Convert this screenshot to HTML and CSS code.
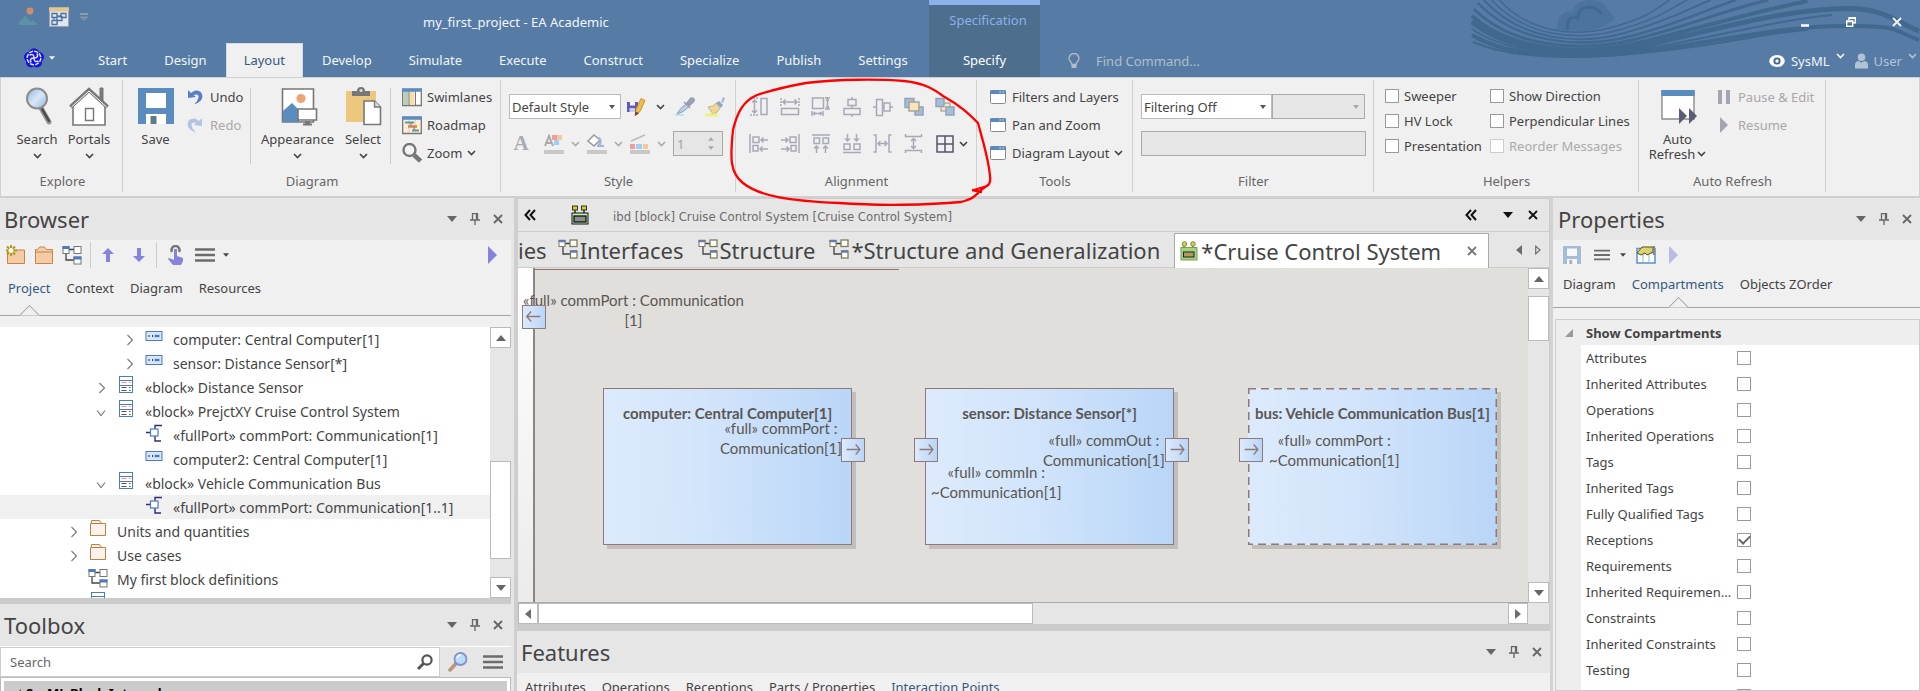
FILE: index.html
```html
<!DOCTYPE html>
<html lang="en">
<head>
<meta charset="utf-8">
<title>my_first_project - EA Academic</title>
<link rel="stylesheet" href="styles.css">
</head>
<body>
<svg class="defs" aria-hidden="true">
  <defs>
    <linearGradient id="g-lens" x1="0" y1="0" x2="1" y2="1"><stop offset="0" stop-color="#8fb4dd"/><stop offset=".5" stop-color="#d9e8f7"/><stop offset="1" stop-color="#8fb4dd"/></linearGradient>
  </defs>
  <symbol id="chev" viewBox="0 0 9 6"><path d="M1 1l3.5 3.5L8 1" fill="none" stroke="currentColor" stroke-width="1.6"/></symbol>
  <symbol id="tri-down" viewBox="0 0 10 6"><path d="M0 0h10L5 6z" fill="currentColor"/></symbol>
  <symbol id="tri-up" viewBox="0 0 10 6"><path d="M0 6h10L5 0z" fill="currentColor"/></symbol>
  <symbol id="tri-left" viewBox="0 0 6 10"><path d="M6 0v10L0 5z" fill="currentColor"/></symbol>
  <symbol id="tri-right" viewBox="0 0 6 10"><path d="M0 0v10l6-5z" fill="currentColor"/></symbol>
  <symbol id="tri-right-o" viewBox="0 0 6 10"><path d="M.7 1.2v7.6L5.2 5z" fill="none" stroke="currentColor" stroke-width="1.2"/></symbol>
  <symbol id="play" viewBox="0 0 9 18"><path d="M0 0v18l9-9z" fill="currentColor"/></symbol>
  <symbol id="close" viewBox="0 0 10 10"><path d="M1 1l8 8M9 1L1 9" fill="none" stroke="currentColor" stroke-width="1.8"/></symbol>
  <symbol id="pin" viewBox="0 0 10 12"><path d="M2.5 6.5v-6h5v6M6.5 1v5M0 7h10M5 7v5" fill="none" stroke="currentColor" stroke-width="1.3"/></symbol>
  <symbol id="dbl-left" viewBox="0 0 12 12"><path d="M6 1L1.500 6L6 11M11 1L6.500 6L11 11" fill="none" stroke="currentColor" stroke-width="2"/></symbol>
  <symbol id="menu" viewBox="0 0 20 14"><path d="M0 1.500h20M0 7h20M0 12.500h20" stroke="#6c6c6c" stroke-width="2.4"/></symbol>
  <symbol id="exp-closed" viewBox="0 0 16 12"><path d="M5.500 1l5 5l-5 5" fill="none" stroke="currentColor" stroke-width="1.1"/></symbol>
  <symbol id="exp-open" viewBox="0 0 16 12"><path d="M3 4.500l4 5l4-5" fill="none" stroke="currentColor" stroke-width="1.1"/></symbol>
  <symbol id="part" viewBox="0 0 20 20"><rect x="2" y="3.500" width="16" height="9" fill="#d6e6fb" stroke="#4f79c4"/><path d="M5 7v2M8.500 7v2" stroke="#335" stroke-width="1"/><path d="M10.500 8h5" stroke="#4f79c4" stroke-width="2.400"/></symbol>
  <symbol id="block" viewBox="0 0 20 20"><rect x="3.500" y=".5" width="13" height="16" fill="#fff" stroke="#4f79c4"/><path d="M3.500 4.500h13M3.500 9.500h13" stroke="#4f79c4"/><path d="M5.500 6.500h5M13 6.500h1.500" stroke="#ee8f8f"/><path d="M5.500 11.500h5M13 11.500h1.500M5.500 14.500h5M13 14.500h1.500" stroke="#555"/></symbol>
  <symbol id="port" viewBox="0 0 20 20"><path d="M2 8.500h4M18 1.500h-7v4M11 12v5h6" fill="none" stroke="#2e2e70" stroke-width="1.400"/><rect x="6.500" y="5" width="7.500" height="7" fill="#fff" stroke="#4f79c4" stroke-width="1.200"/></symbol>
  <symbol id="folder-o" viewBox="0 0 20 20"><path d="M2.500 15.500v-12h15v12zM3.500 3.500v-3h8l2 3" fill="#fdf1ec" stroke="#b78243"/></symbol>
  <symbol id="bdd" viewBox="0 0 20 20"><path d="M7 4.500h5M4 8v7h8" fill="none" stroke="#444" stroke-width="1.300"/><rect x="1" y="1.500" width="6" height="7" fill="#fff" stroke="#777"/><rect x="12" y="1.500" width="7" height="7" fill="#fff" stroke="#777"/><rect x="12" y="12" width="7" height="7" fill="#fff" stroke="#777"/><path d="M.5 2.500h7M11.500 13h8" stroke="#4f79c4" stroke-width="3"/></symbol>
  <symbol id="bdd-tab" viewBox="0 0 20 20"><path d="M7 4.500h5M5 8v7h7" fill="none" stroke="#444" stroke-width="1.300"/><rect x="1" y="1.500" width="6" height="6" fill="#fff" stroke="#7f7d58"/><rect x="12" y="1" width="7" height="6.500" fill="#fff" stroke="#7f7d58" stroke-width="1.300"/><rect x="12.500" y="12" width="6.500" height="7" fill="#fff" stroke="#7f7d58" stroke-width="1.300"/><path d="M.5 2h7M12 12.500h7" stroke="#6a78ad" stroke-width="2.500"/></symbol>
  <symbol id="ibd" viewBox="0 0 18 20"><path d="M4 5v6M13 5v6" stroke="#111" stroke-width="1.300"/><rect x="1.500" y="1" width="5" height="4" fill="#d6d01a" stroke="#333"/><rect x="10.500" y="1" width="5" height="4" fill="#d6d01a" stroke="#333"/><rect x="1" y="8" width="16" height="11" fill="#bdf0b4" stroke="#111"/><rect x="3" y="11" width="12" height="6" fill="#8d8d8d" stroke="#111" stroke-width="1.300"/></symbol>
  <symbol id="ibd-tab" viewBox="0 0 18 20"><path d="M4 5v6M13 5v6" stroke="#222" stroke-width="1.200"/><rect x="1" y="6.500" width="16" height="12.500" fill="#a2d37f" stroke="#7f9a5d"/><rect x="3.500" y="11" width="10.500" height="5" fill="#b09c60" stroke="#222"/><circle cx="4.500" cy="3" r="2.300" fill="#d2d24a" stroke="#888640"/><circle cx="13" cy="3" r="2.300" fill="#d2d24a" stroke="#888640"/></symbol>
  <symbol id="window" viewBox="0 0 16 14"><rect x=".5" y=".5" width="15" height="13" rx="1" fill="#fff" stroke="#8b8b8b"/><path d="M0 2.200h16" stroke="#5d8aba" stroke-width="3.600"/><path d="M9.500 2h1.300M12.500 2h1.300" stroke="#fff" stroke-width="1.200"/></symbol>
  <symbol id="floppy" viewBox="0 0 36 36"><path d="M0 0h36v36H0z" fill="#5b8cbf"/><path d="M8 5h20v15H8zM8 26h20v10H8z" fill="#fff"/><path d="M12.500 28h6v8h-6z" fill="#5d7a8a"/></symbol>
</svg>

<div class="app">
<header class="header">
  <svg class="waves" viewBox="0 0 460 77" preserveAspectRatio="none" aria-hidden="true">
    <g fill="none" stroke="#41688f">
      <path d="M30 0C62 34 110 38 150 26S190 8 204 0" stroke-width="1.500"/>
      <path d="M22 0C56 36 108 42 152 30S205 8 222 0" stroke-width="1.500"/>
      <path d="M14 0C52 40 110 46 158 33S225 8 246 0" stroke-width="2"/>
      <path d="M8 3C46 42 110 50 165 36S245 8 272 0" stroke-width="2.500"/>
      <path d="M4 9C42 46 110 54 170 39S260 10 305 0" stroke-width="3"/>
      <path d="M2 16C40 49 110 58 176 42S285 13 345 1" stroke-width="4"/>
      <path d="M2 22C40 52 115 60 185 44S315 12 370 9S430 20 459 31" stroke-width="5"/>
      <path d="M2 29C40 55 115 60 190 47S315 20 370 15" stroke-width="2"/>
      <path d="M2 35C40 58 115 61 195 49S325 26 385 26S430 30 459 40" stroke-width="4"/>
      <path d="M3 42C45 60 115 60 195 51S300 33 345 30" stroke-width="2"/>
    </g>
    <path d="M89 30C88 15 98 10 104 12C108 -2 130 -3 138 5C142 12 146 14 148 18Q140 28 120 31Z" fill="#4b739b"/>
    <path d="M100 30C98 18 106 16 110 18C112 4 128 4 134 14" fill="none" stroke="#41688f" stroke-width="3"/>
  </svg>
  <div class="head-left">
    <div class="title-row">
      <div class="qat">
        <svg class="i20" viewBox="0 0 20 20"><circle cx="12" cy="4" r="3.400" fill="#cf8d68"/><path d="M1 18v-3l6-6l6 6l2-2l4 4v1z" fill="#5b93a4"/></svg>
        <svg class="i20" viewBox="0 0 20 20"><path d="M.5.5h19v19H.5z" fill="#dfe6ee" stroke="#9aa5b1"/><path d="M0 2.500h20" stroke="#e3c68d" stroke-width="4"/><path d="M7 9h5M5 11v5h4" stroke="#4c6f9c" fill="none"/><path d="M3 6.500h5v4H3zM12 6.500h5v4h-5zM8 9.500h5v4H8zM3 13.500h5v4H3z" fill="#dfe6ee" stroke="#4c6f9c" stroke-width="1.300"/></svg>
        <svg class="qat-more" viewBox="0 0 8 8"><path d="M0 1h8" stroke="#a1abb5" stroke-width="1.400"/><path d="M.5 4h7L4 7.500z" fill="#7a8590" stroke="#a1abb5" stroke-width=".6"/></svg>
      </div>
      <h1 class="app-title">my_first_project - EA Academic</h1>
    </div>
    <nav class="tabs">
      <button class="app-menu" aria-label="Application menu">
        <svg class="i20" viewBox="0 0 20 20"><g fill="#1414e0"><circle cx="10" cy="5.500" r="5.300"/><circle cx="5" cy="9" r="5"/><circle cx="15" cy="9" r="5"/><circle cx="7" cy="14.500" r="5"/><circle cx="13" cy="14.500" r="5"/></g><g fill="none" stroke="#e4e4ff" stroke-width="1.500"><circle cx="10" cy="10" r="6.800" stroke-dasharray="4.100 1.240"/><path d="M5.500 7q4.500-2 4.500 3q0 5 4.500 3M13 5.500q2 4.500-3 4.500q-5 0-3 4.500"/></g></svg>
        <svg class="tri-s" ><use href="#tri-down"/></svg>
      </button>
      <button class="tab">Start</button><button class="tab">Design</button><button class="tab tab-on">Layout</button><button class="tab">Develop</button><button class="tab">Simulate</button><button class="tab">Execute</button><button class="tab">Construct</button><button class="tab">Specialize</button><button class="tab">Publish</button><button class="tab">Settings</button>
    </nav>
  </div>
  <div class="context">
    <span class="context-name">Specification</span>
    <button class="tab">Specify</button>
  </div>
  <div class="head-right">
    <div class="win">
      <button aria-label="Minimize"><svg class="i10" viewBox="0 0 10 10"><path d="M1 8.500h8" stroke="#fff" stroke-width="2.500"/></svg></button>
      <button aria-label="Restore"><svg class="i10" viewBox="0 0 10 10"><path d="M3 3V.8h6.300v5H7M.7 4h6v5.300h-6zM.5 4.500h6.500M3 1.200h6.500" fill="none" stroke="#fff" stroke-width="1.400"/></svg></button>
      <button aria-label="Close"><svg class="i10"><use href="#close"/></svg></button>
    </div>
    <div class="head-tools">
      <svg class="bulb" viewBox="0 0 12 16"><path d="M4 11.500C4 9 1 8.500 1 5.500a5 5 0 0 1 10 0C11 8.500 8 9 8 11.500z" fill="none" stroke="#b4bcc5" stroke-width="1.300"/><path d="M3.500 11h5v4h-5z" fill="#b4bcc5"/></svg>
      <input class="find" aria-label="Find Command" placeholder="Find Command...">
      <button class="persp">
        <svg class="eye" viewBox="0 0 16 12"><ellipse cx="8" cy="6" rx="7.800" ry="6" fill="#fff"/><circle cx="8" cy="6" r="3.600" fill="#3f6792"/><circle cx="8" cy="6" r="1.700" fill="#fff"/></svg>
        SysML <svg class="chev up"><use href="#chev"/></svg></button>
      <button class="persp user">
        <svg class="person" viewBox="0 0 14 16"><circle cx="7" cy="4" r="4" fill="#b2c3d6"/><path d="M0 16v-5q1-3 4-3l3 2l3-2q3 0 4 3v5z" fill="#b2c3d6"/></svg>
        User <svg class="chev up"><use href="#chev"/></svg></button>
    </div>
  </div>
</header>

<section class="ribbon" aria-label="Layout ribbon">
  <div class="group g-explore">
    <div class="g-body">
      <button class="big"><svg class="i40" viewBox="0 0 40 40"><path d="M24 22l8 14" stroke="#999" stroke-width="5" stroke-linecap="round"/><path d="M25 23l7 12" stroke="#4d4d4d" stroke-width="2.500" stroke-linecap="round"/><circle cx="20" cy="12.500" r="10" fill="url(#g-lens)" stroke="#8c8c8c" stroke-width="2"/></svg>Search<svg class="chev"><use href="#chev"/></svg></button>
      <button class="big"><svg class="i40" viewBox="0 0 40 40"><path d="M31 2h3v13h-3z" fill="#777" stroke="#777"/><path d="M4 39V20L20 5l16 15v19z" fill="#fff" stroke="#777" stroke-width="1.600"/><path d="M1.500 21L20 4l18.500 17" fill="none" stroke="#777" stroke-width="4"/><path d="M2.500 21L20 5l17.500 16" fill="none" stroke="#fff" stroke-width="1"/><path d="M16.500 22.500h8v12h-8z" fill="#fff" stroke="#777" stroke-width="1.400"/></svg>Portals<svg class="chev"><use href="#chev"/></svg></button>
    </div>
    <h2>Explore</h2>
  </div>
  <div class="group g-diagram">
    <div class="g-body">
      <button class="big"><svg class="i40 pad2"><use href="#floppy"/></svg>Save</button>
      <div class="stack s-undo">
        <button class="row"><svg class="i16" viewBox="0 0 16 16"><path d="M1 1l0 8l8-1l-2.500-2Q12 4 11.500 8.500Q11 12 7 15.500Q15 13 15.500 7.500Q15 1 8.500 1.500Q6 2 4 4z" fill="#5580c4"/></svg>Undo</button>
        <button class="row" disabled><svg class="i16" viewBox="0 0 16 16"><path d="M15 1l0 8l-8-1l2.500-2Q4 4 4.500 8.500Q5 12 9 15.500Q1 13 .5 7.500Q1 1 7.500 1.500Q10 2 12 4z" fill="#b3c3e2"/></svg>Redo</button>
      </div>
      <i class="vsep"></i>
      <button class="big wide"><svg class="i40" viewBox="0 0 40 40"><path d="M4.500 3h31v33h-31z" fill="#fff" stroke="#777" stroke-width="1.600"/><path d="M5 36V25l9-8l7 7v12z" fill="#5b8cbf"/><circle cx="23" cy="12.500" r="4.600" fill="#eea477"/><path d="M20 23h18.500v11H20z" fill="#fff" stroke="#777" stroke-width="1.600"/><path d="M27 35h5v3h-5z" fill="#777"/><path d="M25 38.500h9" stroke="#777" stroke-width="2"/></svg>Appearance<svg class="chev"><use href="#chev"/></svg></button>
      <button class="big sel-btn"><svg class="i40" viewBox="0 0 40 40"><path d="M3 5h30v31H3z" fill="#ecc77e"/><path d="M9 5h5q0-4 4-4t4 4h5v5H9z" fill="#777"/><circle cx="18" cy="4.500" r="1.500" fill="#ddd"/><path d="M21 15h10.500l6 6v17.500H21z" fill="#fff" stroke="#777" stroke-width="1.600"/><path d="M31.500 15v6h6" fill="#ddd" stroke="#777" stroke-width="1.400"/></svg>Select<svg class="chev"><use href="#chev"/></svg></button>
      <i class="vsep"></i>
      <div class="stack">
        <button class="row"><svg class="i20" viewBox="0 0 20 20"><path d="M.7 2.500h18.600v16H.7z" fill="#fff" stroke="#777" stroke-width="1.300"/><path d="M1.500 4h5v14h-5z" fill="#b9cdb0"/><path d="M7.500 4h5v14h-5z" fill="#f7dcb0"/><path d="M7 4v14M13.500 4v14" stroke="#777"/><path d="M0 3h20" stroke="#5b8cbf" stroke-width="3.500"/></svg>Swimlanes</button>
        <button class="row"><svg class="i20" viewBox="0 0 20 20"><path d="M.7 2.500h18.600v16H.7z" fill="#fdeed8" stroke="#777" stroke-width="1.300"/><path d="M7 5v13M13 5v13" stroke="#ccc"/><path d="M3 7.500h9M10 15.500h7" stroke="#5d98a3" stroke-width="2.200"/><path d="M6 11.500h9" stroke="#dd8351" stroke-width="2.500"/><path d="M9 8v3M12 12v3" stroke="#777"/><path d="M0 3h20" stroke="#5b8cbf" stroke-width="3.500"/></svg>Roadmap</button>
        <button class="row"><svg class="i20" viewBox="0 0 20 20"><path d="M12 12l6.500 6" stroke="#777" stroke-width="4.500"/><circle cx="7.500" cy="7" r="6" fill="#f3f3f3" stroke="#777" stroke-width="2.400"/></svg>Zoom <svg class="chev"><use href="#chev"/></svg></button>
      </div>
    </div>
    <h2>Diagram</h2>
  </div>
  <div class="group g-style">
    <div class="g-body two">
      <div class="line">
        <span class="combo c-style"><select aria-label="Default Style"><option>Default Style</option></select></span>
        <button class="tool" aria-label="Save style"><svg class="i20" viewBox="0 0 20 20"><path d="M1 5h11v10H1z" fill="#5c5cb8"/><path d="M4 5h5v3.500H4z" fill="#f4f4ff"/><path d="M3.500 11h5.500v4H3.500z" fill="#c9c9ec"/><path d="M9 18.500l1-6.500l5-10.500l4 2l-5 11z" fill="#f0bd48" stroke="#b58427" stroke-width=".8"/><path d="M9 19l.5-4.500l3.500 1.800z" fill="#7a3320"/></svg></button>
        <button class="tool" aria-label="Style options"><svg class="chev mid"><use href="#chev"/></svg></button>
        <button class="tool" aria-label="Pick style"><svg class="i20" viewBox="0 0 20 20"><path d="M2 17q2-5 9-10l3 2.500q-5 6-12 7.500z" fill="#b9cfe6" stroke="#8aa3bd"/><path d="M9 5l6 6M11 7l5-6q4 0 3 3l-5 5z" fill="#9a9fb3" stroke="#9a9fb3" stroke-width="1.500"/><path d="M0 18h9" stroke="#bfe0f0" stroke-width="2"/></svg></button>
        <button class="tool" aria-label="Apply style"><svg class="i20" viewBox="0 0 20 20"><path d="M3 10q6 0 8-4l4 5q-2 5-7 6z" fill="#ecd69a" stroke="#c8b37c"/><path d="M11 6l5 5l2-3l-4-4z" fill="#8ea6c2"/><path d="M16 5l2-5l2 1l-2 5z" fill="#9db9d8"/><path d="M0 18h13" stroke="#eef080" stroke-width="3"/></svg></button>
      </div>
      <div class="line dim">
        <button class="tool a" disabled aria-label="Font"><span class="font-a">A</span></button>
        <button class="tool" disabled aria-label="Font colour"><svg class="i20" viewBox="0 0 20 20"><path d="M1 12L5 2l4 10M2.500 9h5" fill="none" stroke="#aaa" stroke-width="2"/><path d="M8 1h5v5H8z" fill="#f09c9c"/><path d="M13 1h5v5h-5z" fill="#f6c99c"/><path d="M10 6h5v5h-5z" fill="#a4cdf5"/><path d="M0 18h20" stroke="#c8c8c8" stroke-width="4"/></svg></button>
        <svg class="chev"><use href="#chev"/></svg>
        <button class="tool" disabled aria-label="Fill colour"><svg class="i20" viewBox="0 0 20 20"><path d="M1 7l6-6l6 5l-6 6z" fill="#fff" stroke="#999" stroke-width="1.500"/><path d="M11 3q5 0 3 8h3v2h-7v-2q3-1 1-8z" fill="#a3b5d4"/><path d="M0 18h20" stroke="#c8c8c8" stroke-width="4"/></svg></button>
        <svg class="chev"><use href="#chev"/></svg>
        <button class="tool" disabled aria-label="Line colour"><svg class="i20" viewBox="0 0 20 20"><path d="M1 7l14-6" stroke="#bbb" stroke-width="1.500"/><path d="M0 10h5v5H0z" fill="#f09c9c"/><path d="M6 10h6v5H6z" fill="#a4cdf5"/><path d="M13 10h5v5h-5z" fill="#f6c99c"/><path d="M0 18h20" stroke="#c8c8c8" stroke-width="4"/></svg></button>
        <svg class="chev"><use href="#chev"/></svg>
        <span class="spin"><input value="1" disabled aria-label="Line width"><span class="spin-a"><svg class="tri-x"><use href="#tri-up"/></svg><svg class="tri-x"><use href="#tri-down"/></svg></span></span>
      </div>
    </div>
    <h2>Style</h2>
  </div>
  <div class="group g-align">
    <div class="g-body">
      <div class="align-grid">
        <svg viewBox="0 0 20 20"><path d="M1 1h9M1 18h9" stroke-dasharray="2 1"/><path d="M5.500 3v13M3 5.500L5.500 3L8 5.500M3 13.500L5.500 16L8 13.500"/><rect x="12" y="1.500" width="6" height="16"/></svg>
        <svg viewBox="0 0 20 20"><path d="M1 1v8M19 1v8" stroke-dasharray="2 1"/><path d="M3 5h14M5.500 2.500L3 5l2.500 2.500M14.500 2.500L17 5l-2.500 2.500"/><rect x="1.500" y="11.500" width="17" height="6"/></svg>
        <svg viewBox="0 0 20 20"><rect x="1.500" y="1" width="11" height="10.500"/><path d="M14 .700h5M14 12h5M16.500 2v9M15 3.500L16.500 2L18 3.500M15 9.500L16.500 11L18 9.500M1 14v5M12 14v5M2.500 16.500h8M4 15l-1.500 1.500L4 18M9 15l1.500 1.500L9 18"/></svg>
        <svg viewBox="0 0 20 20"><path d="M10 0v2M10 8v4M10 18v2"/><rect x="6" y="2.500" width="8" height="6"/><rect x="2" y="11.500" width="16" height="6"/></svg>
        <svg viewBox="0 0 20 20"><path d="M0 10h3M9 10h2M17 10h3"/><rect x="3.500" y="2.500" width="6" height="16"/><rect x="11" y="6" width="6" height="8"/></svg>
        <svg viewBox="0 0 20 20" class="z"><path d="M1 1.500h9v9H1zM11 10h8v8h-8z" fill="#a8bdd6" stroke="#8fa5bf"/><path d="M5 5h10v9H5z" fill="#f6e3c0" stroke="#a9a393"/></svg>
        <svg viewBox="0 0 20 20" class="z"><path d="M6 6h9v8H6z" fill="#f6e3c0" stroke="#b7ae97"/><path d="M1 1.500h8v8H1zM11 10h8v8h-8z" fill="#a8bdd6" stroke="#8fa5bf"/></svg>
        <span></span>
        <svg viewBox="0 0 20 20"><path d="M1 0v19M12 6h7M14.500 3.500L12 6l2.500 2.500M11 15h8M13.500 12.500L11 15l2.500 2.500"/><rect x="4" y="3" width="6" height="5.500"/><rect x="4" y="11.500" width="5" height="5.500"/></svg>
        <svg viewBox="0 0 20 20"><path d="M19 0v19M1 6h7M5.500 3.500L8 6L5.500 8.500M1 15h8M6.500 12.500L9 15l-2.500 2.500"/><rect x="10" y="3" width="6" height="5.500"/><rect x="11" y="11.500" width="5" height="5.500"/></svg>
        <svg viewBox="0 0 20 20"><path d="M1 1h18M5.500 19v-7M3 14.500L5.500 12L8 14.500M14.500 19v-7M12 14.500l2.500-2.500l2.500 2.500"/><rect x="3" y="4" width="5.500" height="5.500"/><rect x="12" y="4" width="5.500" height="5.500"/></svg>
        <svg viewBox="0 0 20 20"><path d="M1 18.500h18M5.500 0v7M3 4.500L5.500 7L8 4.500M14.500 0v7M12 4.500L14.500 7L17 4.500"/><rect x="2" y="10" width="6" height="5.500"/><rect x="12" y="10" width="6" height="5.500"/></svg>
        <svg viewBox="0 0 20 20"><path d="M.5 1h2.500v17H.5M18.500 1H16v17h2.500M5 9.500h9M7.500 7L5 9.500L7.500 12M11.500 7l2.500 2.500L11.500 12"/></svg>
        <svg viewBox="0 0 20 20"><path d="M1.500 0v2.500h16V0M1.500 19v-2.500h16V19M9.500 4.500v10M7 7l2.500-2.500L12 7M7 12l2.500 2.500L12 12"/></svg>
        <svg viewBox="0 0 20 20" class="on"><rect x="2" y="2" width="16" height="16"/><path d="M10 2v16M2 10h16"/></svg>
        <svg class="chev"><use href="#chev"/></svg>
      </div>
    </div>
    <h2>Alignment</h2>
  </div>
  <div class="group g-tools">
    <div class="g-body">
      <div class="stack">
        <button class="row"><svg class="win-i"><use href="#window"/></svg>Filters and Layers</button>
        <button class="row"><svg class="win-i"><use href="#window"/></svg>Pan and Zoom</button>
        <button class="row"><svg class="win-i"><use href="#window"/></svg>Diagram Layout <svg class="chev"><use href="#chev"/></svg></button>
      </div>
    </div>
    <h2>Tools</h2>
  </div>
  <div class="group g-filter">
    <div class="g-body two">
      <div class="line tight">
        <span class="combo c-filter"><select aria-label="Filtering"><option>Filtering Off</option></select></span>
        <span class="combo off"><select disabled aria-label="Filter value"><option></option></select></span>
      </div>
      <input class="off-input" disabled aria-label="Filter text">
    </div>
    <h2>Filter</h2>
  </div>
  <div class="group g-helpers">
    <div class="g-body">
      <div class="checks">
        <label><input type="checkbox">Sweeper</label>
        <label><input type="checkbox">Show Direction</label>
        <label><input type="checkbox">HV Lock</label>
        <label><input type="checkbox">Perpendicular Lines</label>
        <label><input type="checkbox">Presentation</label>
        <label class="off"><input type="checkbox" disabled>Reorder Messages</label>
      </div>
    </div>
    <h2>Helpers</h2>
  </div>
  <div class="group g-auto">
    <div class="g-body">
      <button class="big two-line"><svg class="i40" viewBox="0 0 40 40"><path d="M4 5h32v28H4z" fill="#fff" stroke="#8a8a8a" stroke-width="1.400"/><path d="M3.300 7h33.400" stroke="#5b8cbf" stroke-width="6"/><path d="M21 22v16l8-8zM31 22v16l8-8z" fill="#5d5b75"/></svg><span>Auto<br>Refresh<svg class="chev"><use href="#chev"/></svg></span></button>
      <div class="stack">
        <button class="row" disabled><svg class="i16" viewBox="0 0 16 16"><path d="M2 1h4v14H2zM10 1h4v14h-4z" fill="#a5a5b2"/></svg>Pause &amp; Edit</button>
        <button class="row" disabled><svg class="i16" viewBox="0 0 16 16"><path d="M4 0v16l8-8z" fill="#a5a5b2"/></svg>Resume</button>
      </div>
    </div>
    <h2>Auto Refresh</h2>
  </div>
</section>

<svg class="ink" viewBox="0 0 264 128" aria-hidden="true"><path d="M245 112L258 108C263 105 261 98 260 90C257 72 253 60 249 45C240 36 232 28 214 18C206 12 196 5 175 3C150 1 110 1 77 5C55 9 40 13 28 17C14 23 8 35 4 52C1 80 1 95 14 105C30 118 60 123 110 125C150 128 200 127 232 124C250 119 245 116 259 107M243 112L253 114" fill="none" stroke="#ff0000" stroke-width="2.300"/></svg>

<main class="work">
  <aside class="left">
    <section class="panel browser">
      <header class="p-title"><h2>Browser</h2><span class="p-btns"><button aria-label="Menu"><svg class="tri"><use href="#tri-down"/></svg></button><button aria-label="Pin"><svg class="pin"><use href="#pin"/></svg></button><button aria-label="Close"><svg class="i10"><use href="#close"/></svg></button></span></header>
      <div class="p-tools">
        <svg class="i20" viewBox="0 0 20 20"><path d="M1.500 5h17v13.500h-17z" fill="#f5cba6" stroke="#c28746"/><path d="M5 0v11M0 5.500h11M1 1.500l8 8M9 1.500l-8 8" stroke="#b19b16" stroke-width="2"/><circle cx="5" cy="5.500" r="2.500" fill="#fff"/></svg>
        <svg class="i20" viewBox="0 0 20 20"><path d="M1.500 18.500v-14h2l2-2.500h5l2 2.500h6v14z" fill="#f5cba6" stroke="#c28746"/><path d="M2 7h16" stroke="#c28746"/></svg>
        <svg class="i20"><use href="#bdd"/></svg>
        <i class="vsep"></i>
        <svg class="arrow" viewBox="0 0 12 14"><path d="M6 0l6 6H8v8H4V6H0z" fill="#8683df"/></svg>
        <svg class="arrow" viewBox="0 0 12 14"><path d="M6 14l6-6H8V0H4v8H0z" fill="#8683df"/></svg>
        <i class="vsep"></i>
        <svg class="i20" viewBox="0 0 20 20"><path d="M6 7a4 4 0 1 1 7 0" fill="none" stroke="#777" stroke-width="2.500"/><path d="M8 4h3v7l6 2v3l-2 4H7l-5-6l1-1l5 2z" fill="#8683df"/></svg>
        <svg class="menu"><use href="#menu"/></svg><svg class="tri-x"><use href="#tri-down"/></svg>
        <svg class="play end"><use href="#play"/></svg>
      </div>
      <nav class="p-tabs"><button class="on">Project</button><button>Context</button><button>Diagram</button><button>Resources</button></nav>
      <div class="tree-wrap">
        <ul class="tree">
          <li class="l2"><svg class="ex"><use href="#exp-closed"/></svg><svg class="i20"><use href="#part"/></svg>computer: Central Computer[1]</li>
          <li class="l2"><svg class="ex"><use href="#exp-closed"/></svg><svg class="i20"><use href="#part"/></svg>sensor: Distance Sensor[*]</li>
          <li class="l1"><svg class="ex"><use href="#exp-closed"/></svg><svg class="i20"><use href="#block"/></svg>«block» Distance Sensor</li>
          <li class="l1"><svg class="ex"><use href="#exp-open"/></svg><svg class="i20"><use href="#block"/></svg>«block» PrejctXY Cruise Control System</li>
          <li class="l2"><svg class="ex"></svg><svg class="i20"><use href="#port"/></svg>«fullPort» commPort: Communication[1]</li>
          <li class="l2"><svg class="ex"></svg><svg class="i20"><use href="#part"/></svg>computer2: Central Computer[1]</li>
          <li class="l1"><svg class="ex"><use href="#exp-open"/></svg><svg class="i20"><use href="#block"/></svg>«block» Vehicle Communication Bus</li>
          <li class="l2 sel"><svg class="ex"></svg><svg class="i20"><use href="#port"/></svg>«fullPort» commPort: Communication[1..1]</li>
          <li class="l0"><svg class="ex"><use href="#exp-closed"/></svg><svg class="i20"><use href="#folder-o"/></svg>Units and quantities</li>
          <li class="l0"><svg class="ex"><use href="#exp-closed"/></svg><svg class="i20"><use href="#folder-o"/></svg>Use cases</li>
          <li class="l0"><svg class="ex"></svg><svg class="i20"><use href="#bdd"/></svg>My first block definitions</li>
          <li class="l0"><svg class="ex"></svg><svg class="i20"><use href="#block"/></svg></li>
        </ul>
        <div class="vscroll"><button aria-label="Up"><svg class="tri"><use href="#tri-up"/></svg></button><i class="track-a"></i><i class="thumb"></i><i class="track-b"></i><button aria-label="Down"><svg class="tri"><use href="#tri-down"/></svg></button></div>
      </div>
    </section>
    <section class="panel toolbox">
      <header class="p-title"><h2>Toolbox</h2><span class="p-btns"><button aria-label="Menu"><svg class="tri"><use href="#tri-down"/></svg></button><button aria-label="Pin"><svg class="pin"><use href="#pin"/></svg></button><button aria-label="Close"><svg class="i10"><use href="#close"/></svg></button></span></header>
      <div class="tb-search">
        <label class="tb-box"><input type="text" placeholder="Search" aria-label="Search toolbox"><svg class="i16" viewBox="0 0 16 16"><circle cx="10" cy="6" r="4.600" fill="none" stroke="#555" stroke-width="2.200"/><path d="M6.500 9.500L1 15" stroke="#555" stroke-width="3"/></svg></label>
        <svg class="i20" viewBox="0 0 20 20"><path d="M8 11.500L2 18" stroke="#b9957b" stroke-width="3.500" stroke-linecap="round"/><circle cx="12.500" cy="7" r="6" fill="#b9dcf8" stroke="#8391cf" stroke-width="1.800"/><path d="M9 6q1-3 4-3" stroke="#fff" stroke-width="1.500" fill="none"/></svg>
        <svg class="menu"><use href="#menu"/></svg>
      </div>
      <div class="tb-list"><h3><svg class="i8" viewBox="0 0 8 8"><path d="M8 0v8H0z" fill="#555"/></svg>SysML Block Internal</h3></div>
    </section>
  </aside>

  <section class="center">
    <div class="doc">
      <header class="crumb">
        <button aria-label="Collapse"><svg class="i12"><use href="#dbl-left"/></svg></button>
        <svg class="ibd-i"><use href="#ibd"/></svg>
        <span class="path">ibd [block] Cruise Control System [Cruise Control System]</span>
        <span class="crumb-btns"><button class="prev" aria-label="Previous"><svg class="i12"><use href="#dbl-left"/></svg></button><button aria-label="List"><svg class="tri"><use href="#tri-down"/></svg></button><button aria-label="Close"><svg class="i10"><use href="#close"/></svg></button></span>
      </header>
      <nav class="doc-tabs">
        <button class="cut">ies</button>
        <button><svg class="i20"><use href="#bdd-tab"/></svg>Interfaces</button>
        <button><svg class="i20"><use href="#bdd-tab"/></svg>Structure</button>
        <button><svg class="i20"><use href="#bdd-tab"/></svg>*Structure and Generalization</button>
        <button class="on"><svg class="ibd-i"><use href="#ibd-tab"/></svg>*Cruise Control System<svg class="i10 x"><use href="#close"/></svg></button>
        <span class="doc-nav"><svg class="tri-h"><use href="#tri-left"/></svg><svg class="tri-h"><use href="#tri-right-o"/></svg></span>
      </nav>
      <div class="canvas-wrap">
        <div class="canvas">
          <div class="frame"></div>
          <div class="blk b1">computer: Central Computer[1]</div>
          <div class="blk b2">sensor: Distance Sensor[*]</div>
          <div class="blk b3"><svg class="dash" aria-hidden="true"><rect x="0" y="0" width="100%" height="100%"/></svg>bus: Vehicle Communication Bus[1]</div>
          <div class="lbl t0">«full» commPort : Communication<br>[1]</div>
          <div class="lbl t1">«full» commPort :<br>Communication[1]</div>
          <div class="lbl t2">«full» commIn :<br>~Communication[1]</div>
          <div class="lbl t3">«full» commOut :<br>Communication[1]</div>
          <div class="lbl t4">«full» commPort :<br>~Communication[1]</div>
          <svg class="prt p0" viewBox="0 0 24 24"><path d="M19 11.500H5M9 6l-5 5.500L9 17"/></svg>
          <svg class="prt p1" viewBox="0 0 24 24"><path d="M5 11.500h14M15 6l4.500 5.500L15 17"/></svg>
          <svg class="prt p2" viewBox="0 0 24 24"><path d="M5 11.500h14M15 6l4.500 5.500L15 17"/></svg>
          <svg class="prt p3" viewBox="0 0 24 24"><path d="M5 11.500h14M15 6l4.500 5.500L15 17"/></svg>
          <svg class="prt p4" viewBox="0 0 24 24"><path d="M5 11.500h14M15 6l4.500 5.500L15 17"/></svg>
        </div>
        <div class="vscroll"><button aria-label="Up"><svg class="tri"><use href="#tri-up"/></svg></button><i class="track-a"></i><i class="thumb"></i><i class="track-b"></i><button aria-label="Down"><svg class="tri"><use href="#tri-down"/></svg></button></div>
      </div>
      <div class="hscroll"><button aria-label="Left"><svg class="tri-h"><use href="#tri-left"/></svg></button><i class="thumb"></i><i class="track-b"></i><button aria-label="Right"><svg class="tri-h"><use href="#tri-right"/></svg></button><i class="corner"></i></div>
    </div>
    <section class="panel features">
      <header class="p-title"><h2>Features</h2><span class="p-btns"><button aria-label="Menu"><svg class="tri"><use href="#tri-down"/></svg></button><button aria-label="Pin"><svg class="pin"><use href="#pin"/></svg></button><button aria-label="Close"><svg class="i10"><use href="#close"/></svg></button></span></header>
      <nav class="p-tabs"><button>Attributes</button><button>Operations</button><button>Receptions</button><button>Parts / Properties</button><button class="on">Interaction Points</button></nav>
    </section>
  </section>

  <aside class="right panel">
    <header class="p-title"><h2>Properties</h2><span class="p-btns"><button aria-label="Menu"><svg class="tri"><use href="#tri-down"/></svg></button><button aria-label="Pin"><svg class="pin"><use href="#pin"/></svg></button><button aria-label="Close"><svg class="i10"><use href="#close"/></svg></button></span></header>
    <div class="p-tools">
      <svg class="i18 faded"><use href="#floppy"/></svg>
      <svg class="menu m16"><use href="#menu"/></svg><svg class="tri-x"><use href="#tri-down"/></svg>
      <svg class="i20" viewBox="0 0 20 20"><path d="M1 3.500h18v14.500H1z" fill="#fff" stroke="#5d8fc7" stroke-width="1.500"/><path d="M1 8h18M7 4v14M13 8v10" stroke="#8db3df"/><path d="M1 8l5-6h11v5l-6 3l-2-2l-4 2z" fill="#dbd36c" stroke="#55501e"/><path d="M17 1h2v9h-2z" fill="#888"/></svg>
      <svg class="play faint"><use href="#play"/></svg>
    </div>
    <nav class="p-tabs short"><button>Diagram</button><button class="on">Compartments</button><button>Objects ZOrder</button></nav>
    <div class="props">
      <h3><svg class="i8" viewBox="0 0 8 8"><path d="M8 0v8H0z" fill="#999"/></svg>Show Compartments</h3>
      <div class="prop-rows">
        <label><span>Attributes</span><input type="checkbox"></label>
        <label><span>Inherited Attributes</span><input type="checkbox"></label>
        <label><span>Operations</span><input type="checkbox"></label>
        <label><span>Inherited Operations</span><input type="checkbox"></label>
        <label><span>Tags</span><input type="checkbox"></label>
        <label><span>Inherited Tags</span><input type="checkbox"></label>
        <label><span>Fully Qualified Tags</span><input type="checkbox"></label>
        <label><span>Receptions</span><input type="checkbox" checked></label>
        <label><span>Requirements</span><input type="checkbox"></label>
        <label><span>Inherited Requiremen...</span><input type="checkbox"></label>
        <label><span>Constraints</span><input type="checkbox"></label>
        <label><span>Inherited Constraints</span><input type="checkbox"></label>
        <label><span>Testing</span><input type="checkbox"></label>
        <label><span></span><input type="checkbox"></label>
      </div>
    </div>
  </aside>
</main>
</div>
</body>
</html>
```
FILE: styles.css
```css
* { box-sizing: border-box; }
body {
  margin: 0;
  font: 13px/18px "Noto Sans", "Open Sans", sans-serif;
  color: #444;
  background: #e6e6e6;
}
button, input, select { font: inherit; color: inherit; }
button { border: 0; padding: 0; background: none; white-space: nowrap; }
h1, h2, h3, ul { margin: 0; padding: 0; font-size: 13px; font-weight: 400; }
svg { flex: none; display: block; }
.defs { position: absolute; width: 0; height: 0; }
.app { position: relative; display: flex; flex-direction: column; height: 100vh; overflow: hidden; }

/* shared icon sizes */
.i8 { width: 8px; height: 8px; }
.i10 { width: 10px; height: 10px; }
.i12 { width: 12px; height: 12px; }
.i16 { width: 16px; height: 16px; }
.i18 { width: 18px; height: 18px; }
.i20 { width: 20px; height: 20px; }
.i40 { width: 40px; height: 40px; }
.pad2 { padding: 2px; }
.chev { display: inline-block; width: 9px; height: 6px; }
.mid { display: block; }
.tri { width: 10px; height: 6px; }
.tri-s { width: 6px; height: 4px; }
.tri-x { width: 6px; height: 4px; }
.tri-h { width: 6px; height: 10px; color: #6c6c6c; }
.pin { width: 10px; height: 12px; }
.menu { width: 20px; height: 14px; }
.play { width: 9px; height: 18px; color: #8683df; }

/* title bar and ribbon tabs */
.header { position: relative; display: flex; flex: none; height: 77px; background: #567ca6; color: #f2f5f8; }
.waves { position: absolute; right: 0; top: 0; width: 450px; height: 77px; }
.head-left, .head-right, .context { position: relative; display: flex; flex-direction: column; }
.head-left { width: 929px; flex: none; }
.title-row { display: flex; align-items: center; height: 43px; }
.qat { display: flex; align-items: center; gap: 11px; width: 423px; padding: 0 0 9px 18px; }
.qat-more { width: 8px; height: 8px; }
.tabs { display: flex; gap: 1px; height: 34px; }
.app-menu { display: flex; flex: none; align-items: center; gap: 5px; width: 79px; padding: 0 0 4px 24px; }
.tab { padding: 0 17px 2px; border: 1px solid transparent; border-bottom: 0; }
.tab-on { background: #f0f0f0; color: #35597e; border-color: #d4dbe3; }
.context { width: 111px; flex: none; background: #4d6e8c; border-top: 5px solid #8bb1ea; justify-content: space-between; }
.context-name { color: #8bb1ea; text-align: center; padding: 6px 0 0 7px; }
.context .tab { height: 34px; color: #fff; }
.head-right { flex: 1; }
.win { display: flex; justify-content: flex-end; gap: 36px; height: 43px; padding-right: 18px; align-items: center; }
.head-tools { display: flex; align-items: center; height: 34px; padding: 1px 3px 0 28px; }
.bulb { width: 12px; height: 16px; margin-right: 16px; }
.find { flex: 1; min-width: 0; border: 0; padding: 0; background: none; }
.find::placeholder { color: #b1bdca; opacity: 1; }
.persp { display: flex; align-items: center; gap: 6px; margin-left: 10px; }
.user { color: #b2c3d6; }
.eye { width: 16px; height: 12px; }
.person { width: 13px; height: 16px; }
.up { margin-bottom: 9px; }

/* ribbon */
.ribbon { display: flex; flex: none; height: 121px; background: #f0f0f0; border: 1px solid #d0d0d0; border-width: 1px 1px 2px; }
.group { position: relative; display: flex; flex-direction: column; flex: none; padding-top: 5px; }
.group::after { content: ""; position: absolute; right: 0; top: 2px; bottom: 4px; width: 1px; background: #d0d0d0; }
.group h2 { text-align: center; color: #666; line-height: 28px; }
.g-body { display: flex; height: 84px; }
.g-explore { width: 122px; padding-left: 10px; }
.g-diagram { width: 378px; }
.g-style { width: 235px; }
.g-align { width: 241px; }
.g-tools { width: 156px; }
.g-filter { width: 241px; }
.g-helpers { width: 265px; }
.g-auto { width: 187px; }
.g-explore h2 { padding-right: 9px; }
.big { display: flex; flex-direction: column; align-items: center; width: 52px; padding-top: 3px; }
.big .chev { margin-top: 5px; color: #444; }
.big > .i40 { margin-bottom: 4px; }
.g-diagram .big { width: 63px; }
.g-diagram .wide { width: 77px; margin-left: 8px; }
.g-diagram .sel-btn { width: 54px; }
.g-diagram .g-body { padding-left: 1px; }
.stack { display: flex; flex-direction: column; }
.row { display: flex; align-items: center; height: 28px; gap: 5px; }
.row:disabled { color: #a8a8a8; }
.s-undo .row { gap: 7px; }
.s-undo { width: 63px; }
.vsep { flex: none; width: 1px; background: #ccc; margin: 5px 0 3px; }
.g-diagram .vsep + .stack { padding-left: 11px; }
.two { flex-direction: column; justify-content: center; gap: 12px; }
.line { display: flex; align-items: center; height: 25px; }
.combo { position: relative; display: block; height: 25px; background: #fff; border: 1px solid #bbb; }
.combo select { appearance: none; width: 100%; height: 100%; padding: 0 2px; border: 0; background: none; }
.combo::after { content: ""; position: absolute; right: 5px; top: 10px; border: 3px solid transparent; border-top: 4px solid #555; border-bottom: 0; }
.c-style { width: 112px; }
.g-style .g-body { padding-left: 8px; }
.g-style .line { gap: 10px; }
.g-style .c-style + .tool { margin-left: -5px; }
.g-style .dim { gap: 7px; padding-left: 3px; color: #aaa; }
.dim .a { width: 18px; margin-right: 7px; }
.font-a { font: bold 21px/20px "Liberation Serif", serif; color: #aaaab2; }
.spin { display: flex; width: 50px; height: 25px; border: 1px solid #a8a8a8; background: #e6e6e6; }
.spin input { width: 34px; border: 0; padding: 0 3px; background: none; color: #a0a0a0; }
.spin-a { display: flex; flex-direction: column; justify-content: space-evenly; }
.align-grid { display: grid; grid-template-columns: repeat(7, 20px) 10px; grid-auto-rows: 20px; gap: 17px 11px; align-content: center; padding-left: 13px; }
.align-grid svg:not(.chev) { width: 20px; height: 20px; fill: none; stroke: #a9a9b6; stroke-width: 1.5; }
.align-grid .on:not(.chev) { stroke: #55546e; }
.align-grid .chev { align-self: center; margin-left: -7px; }
.g-tools .stack { padding-left: 13px; }
.win-i { width: 16px; height: 14px; margin-right: 1px; }
.tight { width: 224px; }
.g-filter .g-body { padding-left: 8px; }
.c-filter { width: 131px; }
.tight .off { flex: 1; background: #e6e6e6; border-color: #aaa; }
.off::after { border-top-color: #aaa; }
.off-input { width: 225px; height: 25px; border: 1px solid #aaa; background: #e6e6e6; }
.checks { display: grid; grid-template-columns: 105px auto; grid-auto-rows: 25px; padding-left: 11px; }
label { display: flex; align-items: center; }
.checks label { gap: 5px; white-space: nowrap; }
.checks .off { color: #aaa; }
input[type="checkbox"] { appearance: none; flex: none; display: grid; place-items: center; width: 14px; height: 14px; margin: 0; border: 1px solid #999; background: #fff; }
input[type="checkbox"]:disabled { border-color: #ccc; }
input[type="checkbox"]:checked::after { content: ""; width: 9px; height: 5px; margin-bottom: 3px; border: solid #666; border-width: 0 0 2px 2px; transform: rotate(-45deg); }
.g-auto .big { width: 77px; }
.g-auto .two-line { line-height: 15px; }
.g-auto .big .chev { margin: 0 0 2px 2px; }
.g-auto .big span { padding-top: 2px; }
.g-auto .row { gap: 6px; }
.ink { position: absolute; z-index: 3; left: 729px; top: 78px; width: 264px; height: 128px; pointer-events: none; }

/* docked panels */
.work { display: flex; flex: 1; min-height: 0; }
.left { display: flex; flex-direction: column; width: 517px; flex: none; padding-right: 3px; border-right: 3px solid #cfcfcf; }
.panel { display: flex; flex-direction: column; background: #f0f0f0; }
.browser { height: 406px; flex: none; border-bottom: 6px solid #cbcbcb; }
.p-title { display: flex; flex: none; align-items: center; justify-content: space-between; height: 42px; padding: 0 8px 0 4px; background: #e6e6e6; }
.p-title h2 { font-size: 22px; line-height: 42px; }
.p-btns { display: flex; align-items: center; gap: 13px; color: #666; }
.p-tools { display: flex; align-items: center; flex: none; height: 31px; padding: 0 14px 2px 6px; gap: 8px; }
.p-tools .vsep { height: 26px; margin: 0 1px 0 0; }
.arrow { width: 12px; height: 14px; margin: 0 9px 0 2px; }
.p-tools .arrow + .vsep { margin-left: -6px; }
.p-tools .menu { margin-left: 1px; }
.end { margin-left: auto; }
.p-tabs { display: flex; flex: none; height: 45px; border-bottom: 1px solid #a5a5a5; padding-left: 8px; gap: 16px; }
.p-tabs button { position: relative; padding-bottom: 10px; }
.p-tabs .on { color: #35597e; }
.p-tabs .on::after { content: ""; position: absolute; left: 50%; bottom: -8px; width: 14px; height: 14px; margin-left: -7px; border: solid #a5a5a5; border-width: 1px 0 0 1px; background: #f0f0f0; transform: rotate(45deg); clip-path: polygon(-10% -10%, 110% -10%, -10% 110%); }
.tree-wrap { display: flex; flex: 1; min-height: 0; margin-top: 11px; background: #fff; }
.tree { flex: 1; list-style: none; overflow: hidden; font-size: 14px; }
.tree li { display: flex; align-items: center; height: 24px; padding-top: 2px; white-space: nowrap; }
.tree .i20 { margin: 0 9px 4px 6px; }
.ex { width: 16px; height: 12px; color: #777; }
.l0 { padding-left: 66px; }
.l1 { padding-left: 94px; }
.l2 { padding-left: 122px; }
.sel { background: #f0f0f0; }
.vscroll { display: flex; flex-direction: column; width: 21px; flex: none; background: #e6e6e6; color: #666; }
.vscroll button, .hscroll button { display: grid; place-items: center; flex: none; height: 21px; background: #fff; border: 1px solid #bbb; }
.thumb { background: #fff; border: 1px solid #bbb; }
.tree-wrap .track-a { flex: 114; }
.tree-wrap .thumb { flex: 97; }
.tree-wrap .track-b { flex: 18; }
.toolbox { flex: 1; min-height: 0; }
.tb-search { display: flex; align-items: center; flex: none; gap: 8px; height: 31px; background: #e6e6e6; border-top: 1px solid #fff; }
.tb-box { flex: none; width: 440px; height: 30px; padding: 0 6px 1px 9px; background: #fff; border: 1px solid #ccc; }
.tb-box input { flex: 1; border: 0; padding: 0; background: none; }
.tb-box input::placeholder { color: #666; opacity: 1; }
.tb-search .menu { margin-left: 7px; }
.tb-list { flex: 1; padding: 3px 3px 0; border: 1px solid #bbb; background: #fff; }
.tb-list h3 { display: flex; align-items: center; gap: 5px; height: 23px; padding-left: 9px; font-weight: 700; color: #000; background: #cbcbcb; }

/* document area */
.center { display: flex; flex-direction: column; flex: 1; min-width: 0; }
.doc { display: flex; flex-direction: column; height: 433px; flex: none; border: 1px solid #ccc; border-bottom: 7px solid #cbcbcb; }
.crumb { display: flex; align-items: center; flex: none; height: 33px; padding: 0 11px 0 6px; color: #111; border-bottom: 1px solid #ccc; }
.ibd-i { width: 18px; height: 20px; }
.crumb .ibd-i { margin: 0 24px 0 35px; }
.path { font: 13px/16px "DejaVu Sans Condensed", "DejaVu Sans", sans-serif; color: #6c6c6c; padding-top: 3px; }
.crumb-btns { display: flex; align-items: center; gap: 15px; margin-left: auto; }
.prev { margin-right: 11px; }
.doc-tabs { display: flex; flex: none; height: 36px; border-bottom: 1px solid #ccc; font-size: 22px; line-height: 30px; }
.doc-tabs button { display: flex; align-items: center; gap: 2px; margin-right: 14px; }
.doc-tabs .i20 { margin-bottom: 1px; }
.doc-tabs .cut { margin-right: 11px; }
.doc-tabs .on { position: relative; gap: 3px; margin: 1px 0 -1px 0; padding: 0 11px 0 5px; background: #fff; border: 1px solid #aaa; border-bottom: 0; }
.doc-tabs .x { margin-left: 23px; color: #777; }
.doc-nav { display: flex; align-items: center; gap: 13px; margin-left: auto; padding-right: 8px; }
.canvas-wrap { display: flex; flex: 1; min-height: 0; }
.canvas { position: relative; flex: 1; overflow: hidden; background: linear-gradient(#fff, #ecebe9); font-family: Lato, sans-serif; font-size: 15px; border-bottom: 1px solid #aaa; color: #5a5654; }
.frame { position: absolute; left: 15px; top: 0; right: 0; bottom: 0; background: #e1dfdb; border-left: 2px solid #8f8484; }
.frame::before { content: ""; position: absolute; left: 0; top: 1px; width: 364px; height: 1px; background: #8f7474; }
.blk { position: absolute; top: 120px; width: 249px; height: 157px; padding-top: 15px; font-weight: 700; text-align: center; white-space: nowrap; border: 1px solid #927979; background: linear-gradient(90deg, #dceafc, #d3e5fb 40%, #b9d6f7); box-shadow: 4px 4px 0 #c1bfbb; }
.b1 { left: 85px; }
.b2 { left: 407px; }
.b3 { left: 730px; padding: 16px 0 0; border: 0; }
.dash { position: absolute; inset: 0; width: 100%; height: 100%; fill: none; stroke: #927979; stroke-width: 3; stroke-dasharray: 8 5; }
.lbl { position: absolute; text-align: center; line-height: 20px; white-space: nowrap; }
.t0 { left: 5px; top: 22px; }
.t1 { left: 202px; top: 150px; }
.t2 { left: 413px; top: 194px; }
.t3 { left: 525px; top: 162px; }
.t4 { left: 751px; top: 162px; }
.prt { position: absolute; width: 24px; height: 24px; fill: none; stroke: #927979; stroke-width: 1.5; border: 1px solid #927979; background: linear-gradient(90deg, #dceafc, #b9d6f7); top: 170px; }
.p0 { left: 4px; top: 37px; }
.p1 { left: 323px; }
.p2 { left: 396px; }
.p3 { left: 647px; }
.p4 { left: 721px; }
.canvas-wrap .vscroll { width: 21px; }
.canvas-wrap .track-a { flex: 7; }
.canvas-wrap .thumb { flex: 43; }
.canvas-wrap .track-b { flex: 243; }
.hscroll { display: flex; flex: none; height: 21px; }
.hscroll button { width: 20px; }
.hscroll .thumb { flex: 494; }
.hscroll .track-b { flex: 476; }
.hscroll .corner { width: 21px; }
.features { flex: 1; min-height: 0; }
.features .p-tabs { height: 40px; }
.features .p-tabs button { padding-bottom: 12px; }

/* properties */
.right { width: 370px; flex: none; border-left: 3px solid #d2d2d2; }
.right .p-title { padding-left: 5px; }
.right .p-tools { gap: 13px; padding-left: 10px; }
.right .p-tools .menu { margin-left: 0; }
.right .p-tools .tri-x { margin: 0 -3px; }
.right .m16 { width: 16px; }
.faded { opacity: .5; }
.faint { opacity: .5; }
.short { height: 37px; }
.right .p-tabs { padding-left: 10px; }
.props { flex: 1; min-height: 0; overflow: hidden; margin: 11px 0 0 2px; border: 1px solid #ccc; background: #eee; }
.props h3 { display: flex; align-items: center; gap: 13px; height: 25px; padding-left: 9px; font-weight: 700; }
.prop-rows { margin-left: 25px; background: #fff; }
.prop-rows label { height: 26px; padding-left: 5px; }
.prop-rows span { width: 147px; margin-right: 4px; overflow: hidden; text-overflow: ellipsis; white-space: nowrap; }
```
